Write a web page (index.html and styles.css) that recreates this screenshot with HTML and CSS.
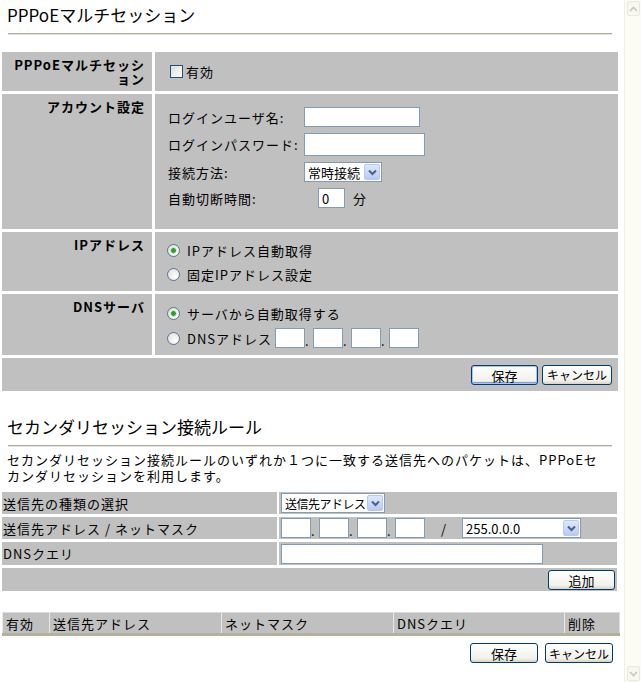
FILE: index.html
```html
<!DOCTYPE html>
<html>
<head>
  <meta charset="utf-8">
  <title>PPPoEマルチセッション</title>
  <link rel="stylesheet" href="styles.css">
</head>
<body>
<div class="window">
  <div class="page">

    <h1 class="title">PPPoEマルチセッション</h1>
    <hr class="rule">

    <div class="form">
      <div class="label">PPPoEマルチセッション</div>
      <div class="value value-check">
        <label><input type="checkbox" class="check">有効</label>
      </div>

      <div class="label">アカウント設定</div>
      <div class="value">
        <div class="fields">
          <span class="field-name">ログインユーザ名:</span>
          <input type="text" class="text w-user">
          <span class="field-name">ログインパスワード:</span>
          <input type="password" class="text w-pass">
          <span class="field-name">接続方法:</span>
          <span class="select w-mode">
            <select><option>常時接続</option><option>オンデマンド接続</option><option>手動接続</option></select>
            <span class="drop"><svg width="9" height="7" viewBox="0 0 9 7"><path d="M1 1.5l3.5 3.5 3.5-3.5" fill="none" stroke="#4d6185" stroke-width="2"/></svg></span>
          </span>
          <span class="field-name">自動切断時間:</span>
          <span class="idle"><input type="text" class="text w-num" value="0"><span class="unit">分</span></span>
        </div>
      </div>

      <div class="label">IPアドレス</div>
      <div class="value options">
        <label class="opt"><input type="radio" name="ip" class="radio" checked>IPアドレス自動取得</label>
        <label class="opt"><input type="radio" name="ip" class="radio">固定IPアドレス設定</label>
      </div>

      <div class="label">DNSサーバ</div>
      <div class="value options options-dns">
        <label class="opt"><input type="radio" name="dns" class="radio" checked>サーバから自動取得する</label>
        <div class="opt">
          <input type="radio" name="dns" class="radio">
          <span class="dns-name">DNSアドレス</span>
          <span class="ip">
            <input type="text" class="text w-oct"><span class="dot">.</span><input type="text" class="text w-oct"><span class="dot">.</span><input type="text" class="text w-oct"><span class="dot">.</span><input type="text" class="text w-oct">
          </span>
        </div>
      </div>

      <div class="actions">
        <button class="btn btn-default w-save">保存</button>
        <button class="btn w-cancel">キャンセル</button>
      </div>
    </div>

    <h2 class="title title-second">セカンダリセッション接続ルール</h2>
    <hr class="rule">
    <p class="desc">セカンダリセッション接続ルールのいずれか１つに一致する送信先へのパケットは、PPPoEセカンダリセッションを利用します。</p>

    <div class="rules">
      <div class="cell name">送信先の種類の選択</div>
      <div class="cell ctrl">
        <span class="select w-kind">
          <select><option>送信先アドレス</option><option>ドメイン名</option></select>
          <span class="drop"><svg width="9" height="7" viewBox="0 0 9 7"><path d="M1 1.5l3.5 3.5 3.5-3.5" fill="none" stroke="#4d6185" stroke-width="2"/></svg></span>
        </span>
      </div>

      <div class="cell name">送信先アドレス / ネットマスク</div>
      <div class="cell ctrl">
        <span class="ip">
          <input type="text" class="text w-oct"><span class="dot">.</span><input type="text" class="text w-oct"><span class="dot">.</span><input type="text" class="text w-oct"><span class="dot">.</span><input type="text" class="text w-oct">
        </span>
        <span class="slash">/</span>
        <span class="select w-mask">
          <select><option>255.0.0.0</option><option>255.255.0.0</option><option>255.255.255.0</option></select>
          <span class="drop"><svg width="9" height="7" viewBox="0 0 9 7"><path d="M1 1.5l3.5 3.5 3.5-3.5" fill="none" stroke="#4d6185" stroke-width="2"/></svg></span>
        </span>
      </div>

      <div class="cell name">DNSクエリ</div>
      <div class="cell ctrl"><input type="text" class="text w-query"></div>

      <div class="cell add-row"><button class="btn w-add">追加</button></div>
    </div>

    <table class="list">
      <tr>
        <th class="c-on">有効</th>
        <th class="c-addr">送信先アドレス</th>
        <th class="c-mask">ネットマスク</th>
        <th class="c-dns">DNSクエリ</th>
        <th>削除</th>
      </tr>
    </table>

    <div class="footer">
      <button class="btn w-save2">保存</button>
      <button class="btn w-cancel2">キャンセル</button>
    </div>

  </div>

  <div class="scrollbar">
    <span class="sb-btn"><svg width="9" height="6" viewBox="0 0 9 6"><path d="M1 5l3.5-3.5 3.5 3.5" fill="none" stroke="#c9c7b8" stroke-width="1.6"/></svg></span>
    <span class="sb-btn"><svg width="9" height="6" viewBox="0 0 9 6"><path d="M1 1l3.5 3.5 3.5-3.5" fill="none" stroke="#c9c7b8" stroke-width="1.6"/></svg></span>
  </div>
</div>
</body>
</html>
```

FILE: styles.css
```css
body {
  margin: 0;
  font-family: "Noto Sans CJK JP", "Noto Sans", sans-serif;
  font-size: 13px;
  letter-spacing: 1px;
  color: #000;
  background: #fff;
}
.window {
  display: flex;
  height: 682px;
  overflow: hidden;
}
.page {
  flex: 1;
  padding: 0 4px 0 2px;
}

/* headings */
.title {
  margin: 0;
  padding: 4px 5px 0;
  font-size: 17px;
  font-weight: normal;
  line-height: 22px;
  letter-spacing: 0;
}
.title-second {
  margin-top: 25px;
  padding-top: 0;
}
.rule {
  height: 0;
  margin: 7px 8px 0 6px;
  border: 0;
  border-top: 1px solid #aeac9e;
  border-bottom: 1px solid #e6e5dd;
}
.desc {
  margin: 5px 12px 0 5px;
  line-height: 16px;
}

/* form controls, XP look */
input, select, button {
  font-family: "Noto Sans CJK JP", "Noto Sans", sans-serif;
  font-size: 13px;
  color: #000;
}
.text {
  box-sizing: border-box;
  height: 20px;
  margin: 0;
  padding: 0 3px;
  border: 1px solid #7f9db9;
  background: #fff;
}
.w-user { width: 116px; }
.w-pass { width: 121px; height: 23px; }
.w-num { width: 27px; }
.w-oct { width: 30px; }
.w-query { width: 262px; }

.select {
  position: relative;
  display: inline-block;
  height: 20px;
}
.select select {
  appearance: none;
  box-sizing: border-box;
  width: 100%;
  height: 20px;
  margin: 0;
  padding: 0 17px 0 3px;
  border: 1px solid #7f9db9;
  border-radius: 0;
  background: #fff;
  letter-spacing: 0;
}
.select .drop {
  position: absolute;
  top: 2px;
  right: 2px;
  box-sizing: border-box;
  width: 16px;
  height: 16px;
  border: 1px solid #b6c9f1;
  border-radius: 2px;
  background: linear-gradient(#dde8fd, #b7cbf6);
  display: flex;
  align-items: center;
  justify-content: center;
  pointer-events: none;
}
.w-mode { width: 78px; }
.w-kind { width: 104px; }
.w-kind select {
  font-size: 12px;
  letter-spacing: -0.5px;
}
.w-mask { width: 119px; }

.check {
  appearance: none;
  box-sizing: border-box;
  width: 13px;
  height: 13px;
  margin: 0 3px 0 0;
  border: 1px solid #1c5180;
  background: linear-gradient(135deg, #dcdcd6, #fff);
}
.radio {
  appearance: none;
  box-sizing: border-box;
  width: 13px;
  height: 13px;
  margin: 0 7px 0 0;
  border: 1px solid #5a7398;
  border-radius: 50%;
  background: radial-gradient(circle at 65% 65%, #fff, #d9d9d2);
}
.radio:checked {
  background: radial-gradient(circle, #27a227 0 2px, #9adb91 2.5px, transparent 3.5px),
    radial-gradient(circle at 65% 65%, #fff, #d9d9d2);
}

.btn {
  box-sizing: border-box;
  height: 20px;
  padding: 0;
  border: 1px solid #003c74;
  border-radius: 3px;
  background: linear-gradient(#fff, #f2f1eb 80%, #d8d2c6);
  font-size: 12px;
  letter-spacing: 0;
  white-space: nowrap;
  cursor: pointer;
}
.btn-default {
  box-shadow: inset 0 0 0 1px #a8c4f0, inset 0 -1px 0 1px #7b9fe2;
}
.w-save { width: 67px; font-size: 13px; }
.w-cancel { width: 70px; }
.w-add { width: 67px; font-size: 13px; }
.w-save2 { width: 68px; font-size: 13px; }
.w-cancel2 { width: 68px; }

/* PPPoE form */
.form {
  display: grid;
  grid-template-columns: 150px 1fr;
  grid-template-rows: 39px 135px 59px 61px 33px;
  gap: 3px;
  margin: 17px 2px 0 0;
}
.label {
  background: #c0c0c0;
  font-weight: bold;
  text-align: right;
  padding: 6px 7px 0 10px;
  line-height: 14px;
}
.value {
  background: #c0c0c0;
  padding-left: 13px;
}
.value-check {
  display: flex;
  align-items: center;
  padding-left: 15px;
}
.value-check label {
  display: flex;
  align-items: center;
}
.fields {
  display: grid;
  grid-template-columns: 136px auto;
  align-items: center;
  justify-items: start;
  row-gap: 6px;
  padding-top: 13px;
}
.idle {
  display: flex;
  align-items: center;
  margin-left: 14px;
}
.unit {
  margin-left: 8px;
}
.options {
  display: flex;
  flex-direction: column;
  gap: 4px;
  padding-top: 8px;
  padding-left: 12px;
}
.options-dns {
  padding-top: 9px;
  gap: 5px;
}
.opt {
  display: flex;
  align-items: center;
  height: 20px;
}
.dns-name {
  margin-right: 3px;
}
.ip {
  display: inline-flex;
  align-items: flex-end;
}
.dot {
  width: 8px;
  line-height: 14px;
  letter-spacing: 0;
}
.actions {
  grid-column: 1 / -1;
  background: #c0c0c0;
  display: flex;
  justify-content: flex-end;
  align-items: center;
  gap: 4px;
  padding-right: 6px;
}

/* rules */
.rules {
  display: grid;
  grid-template-columns: 275px 1fr;
  grid-template-rows: 22px 22px 23px 23px;
  gap: 3px 2px;
  margin: 8px 3px 0 0;
}
.cell {
  background: #c0c0c0;
  display: flex;
  align-items: center;
}
.name {
  padding-left: 1px;
}
.ctrl {
  padding-left: 2px;
}
.slash {
  margin: 0 15px 0 16px;
}
.add-row {
  grid-column: 1 / -1;
  justify-content: flex-end;
  padding-right: 2px;
}

/* list */
.list {
  width: 100%;
  margin-top: 21px;
  border-collapse: collapse;
  border-top: 1px solid #dcdcdc;
  border-left: 1px solid #dcdcdc;
  border-right: 1px solid #dcdcdc;
  border-bottom: 3px solid #b3b09e;
}
.list th {
  height: 20px;
  padding: 0 3px;
  background: #c0c0c0;
  border-left: 1px solid #e8e8e8;
  font-weight: normal;
  text-align: left;
}
.c-on { width: 40px; }
.c-addr { width: 165px; }
.c-mask { width: 165px; }
.c-dns { width: 164px; }

.footer {
  display: flex;
  justify-content: flex-end;
  gap: 7px;
  margin-top: 7px;
  padding-right: 7px;
}

/* disabled scrollbar */
.scrollbar {
  flex: none;
  box-sizing: border-box;
  width: 17px;
  padding: 1px 1px 1px 2px;
  background: #fcfcf5;
  border-left: 1px solid #f1f0e8;
  display: flex;
  flex-direction: column;
  justify-content: space-between;
}
.sb-btn {
  box-sizing: border-box;
  height: 15px;
  border: 1px solid #e9e8de;
  border-radius: 2px;
  background: #f8f8f1;
  display: flex;
  align-items: center;
  justify-content: center;
}
```
